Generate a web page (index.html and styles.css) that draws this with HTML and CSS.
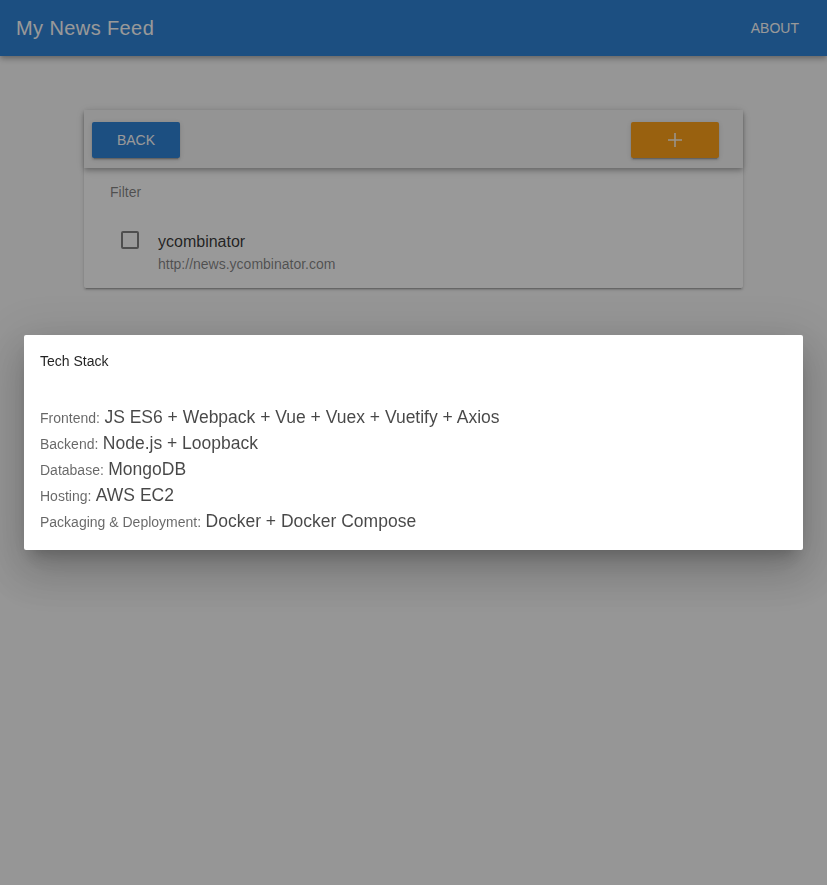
FILE: index.html
```html
<!DOCTYPE html>
<html>
<head>
<meta charset="utf-8">
<link rel="stylesheet" href="styles.css">
</head>
<body>
<div class="app">
  <header class="appbar">
    <div class="appbar-title">My News Feed</div>
    <button class="appbar-btn">About</button>
  </header>
  <main class="content">
    <section class="card">
      <div class="card-toolbar">
        <button class="btn btn-primary">Back</button>
        <button class="btn btn-orange"><svg class="plus" width="16" height="16" viewBox="0 0 16 16"><path d="M1 8H15M8 1V15" stroke="#fff" stroke-width="1.6" fill="none"/></svg></button>
      </div>
      <div class="card-body">
        <div class="filter-label">Filter</div>
        <div class="feed-item">
          <span class="checkbox"></span>
          <div class="feed-text">
            <div class="feed-name">ycombinator</div>
            <div class="feed-url">http://news.ycombinator.com</div>
          </div>
        </div>
      </div>
    </section>
  </main>
</div>
<div class="overlay"></div>
<div class="dialog-wrap">
  <div class="dialog">
    <div class="dialog-title">Tech Stack</div>
    <div class="dialog-body">
      <div class="row"><span class="lbl">Frontend:</span> <span class="val">JS ES6 + Webpack + Vue + Vuex + Vuetify + Axios</span></div>
      <div class="row"><span class="lbl">Backend:</span> <span class="val">Node.js + Loopback</span></div>
      <div class="row"><span class="lbl">Database:</span> <span class="val">MongoDB</span></div>
      <div class="row"><span class="lbl">Hosting:</span> <span class="val">AWS EC2</span></div>
      <div class="row"><span class="lbl">Packaging &amp; Deployment:</span> <span class="val">Docker + Docker Compose</span></div>
    </div>
  </div>
</div>
</body>
</html>
```
FILE: styles.css
```css
* { box-sizing: border-box; }
html, body { margin: 0; padding: 0; }
body {
  background: #fafafa;
  font-family: "Liberation Sans", Arial, sans-serif;
  width: 827px;
  height: 885px;
  overflow: hidden;
}
.app { min-height: 885px; }
.appbar {
  height: 56px;
  background: #1976d2;
  color: #fff;
  display: flex;
  align-items: center;
  justify-content: space-between;
  padding: 0 12px 0 16px;
  box-shadow: 0 2px 4px -1px rgba(0,0,0,.2), 0 4px 5px 0 rgba(0,0,0,.14), 0 1px 10px 0 rgba(0,0,0,.12);
}
.appbar-title {
  font-size: 20px;
  letter-spacing: 0.4px;
  font-weight: 400;
}
.appbar-btn {
  background: none;
  border: 0;
  color: #fff;
  font-family: "Liberation Sans", Arial, sans-serif;
  font-size: 14px;
  text-transform: uppercase;
  padding: 0 16px;
  height: 36px;
}
.content {
  padding-top: 54px;
}
.card {
  width: 659px;
  margin: 0 auto;
  background: #fff;
  box-shadow: 0 3px 1px -2px rgba(0,0,0,.2), 0 2px 2px 0 rgba(0,0,0,.14), 0 1px 5px 0 rgba(0,0,0,.12);
  border-radius: 2px;
}
.card-toolbar {
  height: 58px;
  background: #f5f5f5;
  display: flex;
  align-items: center;
  justify-content: space-between;
  padding: 2px 24px 0 8px;
  box-shadow: 0 2px 4px -1px rgba(0,0,0,.2), 0 4px 5px 0 rgba(0,0,0,.14), 0 1px 10px 0 rgba(0,0,0,.12);
  position: relative;
}
.btn {
  width: 88px;
  height: 36px;
  border: 0;
  border-radius: 2px;
  font-family: "Liberation Sans", Arial, sans-serif;
  font-size: 14px;
  text-transform: uppercase;
  color: #fff;
  display: flex;
  align-items: center;
  justify-content: center;
  box-shadow: 0 3px 1px -2px rgba(0,0,0,.2), 0 2px 2px 0 rgba(0,0,0,.14), 0 1px 5px 0 rgba(0,0,0,.12);
}
.btn-primary { background: #1976d2; }
.btn-orange { background: #ff9800; }
.plus {
  display: block;
  opacity: 0.9;
}
.card-body {
  padding: 16px 0 14px 26px;
}
.filter-label {
  font-size: 14px;
  color: rgba(0,0,0,.54);
  line-height: 16px;
}
.feed-item {
  display: flex;
  align-items: flex-start;
  margin-top: 28px;
  padding-left: 11px;
}
.checkbox {
  width: 18px;
  height: 18px;
  border: 2px solid rgba(0,0,0,.54);
  border-radius: 2px;
  margin-top: 3px;
  margin-right: 19px;
}
.feed-name {
  font-size: 16px;
  color: rgba(0,0,0,.87);
  line-height: 26px;
  padding-top: 1px;
  height: 26px;
}
.feed-url {
  font-size: 14px;
  color: rgba(0,0,0,.54);
  line-height: 20px;
}
.overlay {
  position: fixed;
  inset: 0;
  background: rgba(33,33,33,.46);
}
.dialog-wrap {
  position: fixed;
  inset: 0;
  display: flex;
  align-items: center;
  justify-content: center;
  padding: 0 24px;
}
.dialog {
  width: 100%;
  height: 215px;
  background: #fff;
  border-radius: 2px;
  box-shadow: 0 11px 15px -7px rgba(0,0,0,.2), 0 24px 38px 3px rgba(0,0,0,.14), 0 9px 46px 8px rgba(0,0,0,.12);
  padding: 16px;
}
.dialog-title {
  font-size: 14px;
  color: rgba(0,0,0,.87);
  line-height: 20px;
}
.dialog-body {
  margin-top: 33px;
}
.row {
  line-height: 26px;
  height: 26px;
  white-space: nowrap;
}
.lbl {
  font-size: 14px;
  color: rgba(0,0,0,.6);
}
.val {
  font-size: 17.5px;
  color: rgba(0,0,0,.72);
}
```
